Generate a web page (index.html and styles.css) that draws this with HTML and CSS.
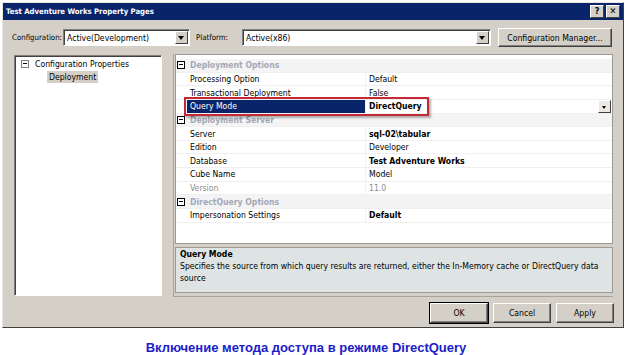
FILE: index.html
```html
<!DOCTYPE html>
<html lang="en">
  <head>
    <meta charset="UTF-8" />
    <title>Test Adventure Works Property Pages</title>
    <link rel="stylesheet" href="styles.css">
  </head>
  <body>
    <div class="dialog">
      <div class="titlebar">
        <span class="title">Test Adventure Works Property Pages</span>
        <div class="caption-btns">
          <span class="cbtn">?</span>
          <span class="cbtn">&#x2715;</span>
        </div>
      </div>

      <div class="toolbar">
        <span class="label label-config">Configuration:</span>
        <div class="combo combo-config">
          <span class="combo-text">Active(Development)</span>
          <span class="combo-arrow"></span>
        </div>
        <span class="label label-platform">Platform:</span>
        <div class="combo combo-platform">
          <span class="combo-text">Active(x86)</span>
          <span class="combo-arrow"></span>
        </div>
        <button class="btn btn-manager">Configuration Manager...</button>
      </div>

      <div class="content">
        <!-- Tree -->
        <div class="tree">
          <div class="tree-item">
            <span class="toggle"></span>
            <span>Configuration Properties</span>
          </div>
          <div class="tree-item tree-child">
            <span class="tree-selected">Deployment</span>
          </div>
        </div>

        <!-- Property grid -->
        <div class="props">
          <div class="grid">
            <div class="row category">
              <span class="margin"><span class="toggle"></span></span>
              <span class="name">Deployment Options</span>
            </div>
            <div class="row">
              <span class="margin"></span>
              <span class="name">Processing Option</span>
              <span class="value">Default</span>
            </div>
            <div class="row">
              <span class="margin"></span>
              <span class="name">Transactional Deployment</span>
              <span class="value">False</span>
            </div>
            <div class="row selected">
              <span class="margin"></span>
              <span class="name">Query Mode</span>
              <span class="value bold">DirectQuery</span>
              <span class="drop-btn"></span>
            </div>
            <div class="row category">
              <span class="margin"><span class="toggle"></span></span>
              <span class="name">Deployment Server</span>
            </div>
            <div class="row">
              <span class="margin"></span>
              <span class="name">Server</span>
              <span class="value bold">sql-02\tabular</span>
            </div>
            <div class="row">
              <span class="margin"></span>
              <span class="name">Edition</span>
              <span class="value">Developer</span>
            </div>
            <div class="row">
              <span class="margin"></span>
              <span class="name">Database</span>
              <span class="value bold">Test Adventure Works</span>
            </div>
            <div class="row">
              <span class="margin"></span>
              <span class="name">Cube Name</span>
              <span class="value">Model</span>
            </div>
            <div class="row readonly">
              <span class="margin"></span>
              <span class="name">Version</span>
              <span class="value">11.0</span>
            </div>
            <div class="row category">
              <span class="margin"><span class="toggle"></span></span>
              <span class="name">DirectQuery Options</span>
            </div>
            <div class="row">
              <span class="margin"></span>
              <span class="name">Impersonation Settings</span>
              <span class="value bold">Default</span>
            </div>

            <!-- red highlight drawn over the grid -->
            <div class="highlight"></div>
          </div>

          <div class="desc">
            <div class="desc-title">Query Mode</div>
            <div class="desc-text">Specifies the source from which query results are returned, either the In-Memory cache or DirectQuery data source</div>
          </div>
        </div>
      </div>

      <div class="footer">
        <button class="btn btn-default">OK</button>
        <button class="btn">Cancel</button>
        <button class="btn">Apply</button>
      </div>
    </div>

    <p class="caption">Включение метода доступа в режиме DirectQuery</p>
  </body>
</html>
```

FILE: styles.css
```css
/* General Styling */
body {
  margin: 0;
  background: #fff;
  font-family: "DejaVu Sans Condensed", "DejaVu Sans", sans-serif;
  font-size: 8.6px;
  color: #000;
}

.dialog {
  box-sizing: border-box;
  width: 622px;
  height: 326px;
  margin: 2px 0 0 2px;
  background: #d4d0c8;
  border: 1px solid;
  border-color: #e8e6e0 #404040 #404040 #e8e6e0;
  display: flex;
  flex-direction: column;
}

/* Title Bar */
.titlebar {
  height: 17px;
  background: #0a246a;
  color: #fff;
  display: flex;
  align-items: center;
  justify-content: space-between;
  padding: 0 3px 0 3px;
}

.title {
  font-weight: bold;
  font-size: 7.7px;
}

.caption-btns {
  display: flex;
  gap: 2px;
}

.cbtn {
  width: 12px;
  height: 11px;
  background: #d4d0c8;
  color: #000;
  font-weight: bold;
  font-size: 9px;
  line-height: 11px;
  text-align: center;
  border: 1px solid;
  border-color: #fff #404040 #404040 #fff;
  box-sizing: content-box;
}

/* Toolbar */
.toolbar {
  display: flex;
  align-items: center;
  height: 19px;
  margin-top: 8px;
  padding-left: 9px;
}

.label {
  font-size: 7.8px;
}

.label-config {
  width: 51px;
}

.label-platform {
  width: 46px;
  margin-left: 6px;
}

.combo {
  box-sizing: border-box;
  height: 17px;
  background: #fff;
  border: 1px solid;
  border-color: #808080 #fff #fff #808080;
  box-shadow: inset 1px 1px 0 #404040;
  display: flex;
  align-items: center;
  justify-content: space-between;
  padding: 1px 1px 1px 3px;
}

.combo-config {
  width: 127px;
}

.combo-platform {
  width: 249px;
}

.combo-arrow {
  box-sizing: border-box;
  width: 13px;
  height: 13px;
  background: #d4d0c8;
  border: 1px solid;
  border-color: #fff #404040 #404040 #fff;
  position: relative;
}

.combo-arrow::after {
  content: "";
  position: absolute;
  left: 2px;
  top: 4px;
  border-left: 3.5px solid transparent;
  border-right: 3.5px solid transparent;
  border-top: 4px solid #000;
}

.btn {
  box-sizing: border-box;
  height: 20px;
  width: 58px;
  font-family: inherit;
  font-size: 8.6px;
  background: #d4d0c8;
  border: 1px solid;
  border-color: #fff #404040 #404040 #fff;
  box-shadow: inset -1px -1px 0 #808080;
  padding: 0;
  color: #000;
}

.btn-manager {
  width: 114px;
  height: 19px;
  margin-left: 7px;
}

.btn-default {
  outline: 1px solid #000;
}

/* Main Area */
.content {
  display: flex;
  margin-top: 7px;
  padding-left: 11px;
  gap: 11px;
  height: 243px;
}

.tree {
  box-sizing: border-box;
  width: 148px;
  height: 241px;
  margin-top: 1px;
  background: #fff;
  border: 1px solid;
  border-color: #808080 #fff #fff #808080;
  box-shadow: inset 1px 1px 0 #404040;
  padding: 1px 0 0 6px;
}

.tree-item {
  display: flex;
  align-items: center;
  gap: 6px;
  height: 13px;
}

.tree-child {
  padding-left: 26px;
}

.tree-selected {
  background: #d4d0c8;
  padding: 1px 2px;
}

.toggle {
  box-sizing: border-box;
  display: inline-block;
  width: 8px;
  height: 8px;
  border: 1px solid #808080;
  background: #fff;
  position: relative;
}

.toggle::after {
  content: "";
  position: absolute;
  left: 1px;
  right: 1px;
  top: 2px;
  height: 1px;
  background: #000;
}

/* Property Grid */
.props {
  width: 439px;
  display: flex;
  flex-direction: column;
  border-left: 1px solid #a8a49c;
  border-bottom: 1px solid #a8a49c;
}

.grid {
  box-sizing: border-box;
  position: relative;
  height: 190px;
  margin-left: 1px;
  background: #fff;
  border: 1px solid #9c9a94;
  padding-top: 4px;
}

.row {
  display: grid;
  grid-template-columns: 11px 179px 1fr;
  height: 13.65px;
  align-items: center;
  border-bottom: 1px solid #f0f0f0;
  box-sizing: border-box;
  position: relative;
}

.row .name {
  padding-left: 3px;
  height: 100%;
  display: flex;
  align-items: center;
  border-right: 1px solid #f0f0f0;
}

.row .value {
  padding-left: 3px;
}

.row .margin {
  display: flex;
  align-items: center;
  padding-left: 1px;
}

.category {
  background: #f4f4f4;
}

.category .name {
  border-right: none;
  color: #a3a8b8;
  font-weight: bold;
  grid-column: 2 / 4;
}

.category .toggle {
  border-color: #000;
}

.selected .name {
  background: #0a246a;
  color: #fff;
}

.readonly {
  color: #8c8c8c;
}

.bold {
  font-weight: bold;
}

.drop-btn {
  box-sizing: border-box;
  position: absolute;
  right: 1px;
  top: 0;
  width: 13px;
  height: 13px;
  background: #ece9e2;
  border: 1px solid;
  border-color: #fff #404040 #404040 #fff;
}

.drop-btn::after {
  content: "";
  position: absolute;
  left: 3px;
  top: 5px;
  border-left: 2.5px solid transparent;
  border-right: 2.5px solid transparent;
  border-top: 3px solid #000;
}

.highlight {
  position: absolute;
  left: 8px;
  top: 42px;
  width: 245px;
  height: 19px;
  box-sizing: border-box;
  border: 2px solid #c42a35;
  box-shadow: 2px 2px 2px rgba(0, 0, 0, 0.3);
}

/* Description */
.desc {
  box-sizing: border-box;
  height: 46px;
  margin: 3px 0 0 1px;
  background: #dde4e3;
  border: 1px solid #9c9a94;
  padding: 0 4px;
  line-height: 12px;
}

.desc-title {
  font-weight: bold;
}

/* Footer */
.footer {
  display: flex;
  justify-content: flex-end;
  gap: 5px;
  margin-top: 6px;
  padding-right: 9px;
}

/* Caption under the screenshot */
.caption {
  margin: 12px 0 0;
  padding-right: 14px;
  text-align: center;
  font-family: "Liberation Sans", Arial, sans-serif;
  font-weight: bold;
  font-size: 13px;
  color: #2020c8;
}
```
